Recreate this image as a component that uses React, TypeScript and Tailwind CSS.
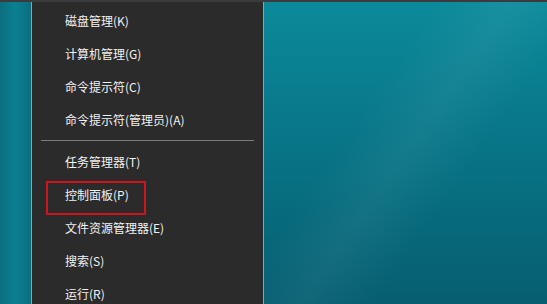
import React from 'react';

const topItems = ['磁盘管理(K)', '计算机管理(G)', '命令提示符(C)', '命令提示符(管理员)(A)'];
const bottomItems = ['任务管理器(T)', '控制面板(P)', '文件资源管理器(E)', '搜索(S)', '运行(R)'];

function MenuRow({ label, marked }: { label: string; marked?: boolean }) {
  return (
    <div className="relative flex h-[33px] items-center pl-[33px] text-[12px] text-[#f2f2f2]">
      {label}
      {marked && (
        <div className="absolute left-[14px] top-[3px] h-[34px] w-[100px] border-2 border-[#d0141b]" />
      )}
    </div>
  );
}

export default function App() {
  return (
    <div
      className="flex h-[304px] w-[547px] overflow-hidden border-t-2 border-[#3b3b3b] bg-[linear-gradient(180deg,#0b8797_0%,#087687_45%,#055a6b_100%)]"
      style={{ fontFamily: '"Noto Sans CJK SC", "Noto Sans", sans-serif' }}
    >
      <div className="w-[31px] shrink-0 bg-[linear-gradient(90deg,#0a6f80,#0b7f91_50%,#0a6e7f)]" />
      <div className="w-[233px] shrink-0 border-x border-[#7fa9b2] bg-[#2b2b2b] pt-[2px]">
        {topItems.map(item => (
          <MenuRow key={item} label={item} />
        ))}
        <div className="mx-[9px] my-[4px] h-px bg-[#7c7c7c]" />
        {bottomItems.map(item => (
          <MenuRow key={item} label={item} marked={item === '控制面板(P)'} />
        ))}
      </div>
      <div className="relative flex-1 bg-[linear-gradient(180deg,#0c8a9b_0%,#08788a_40%,#065e70_100%)]">
        <div className="absolute inset-0 bg-[linear-gradient(125deg,transparent_35%,rgba(255,255,255,0.05)_50%,transparent_65%)]" />
      </div>
    </div>
  );
}
